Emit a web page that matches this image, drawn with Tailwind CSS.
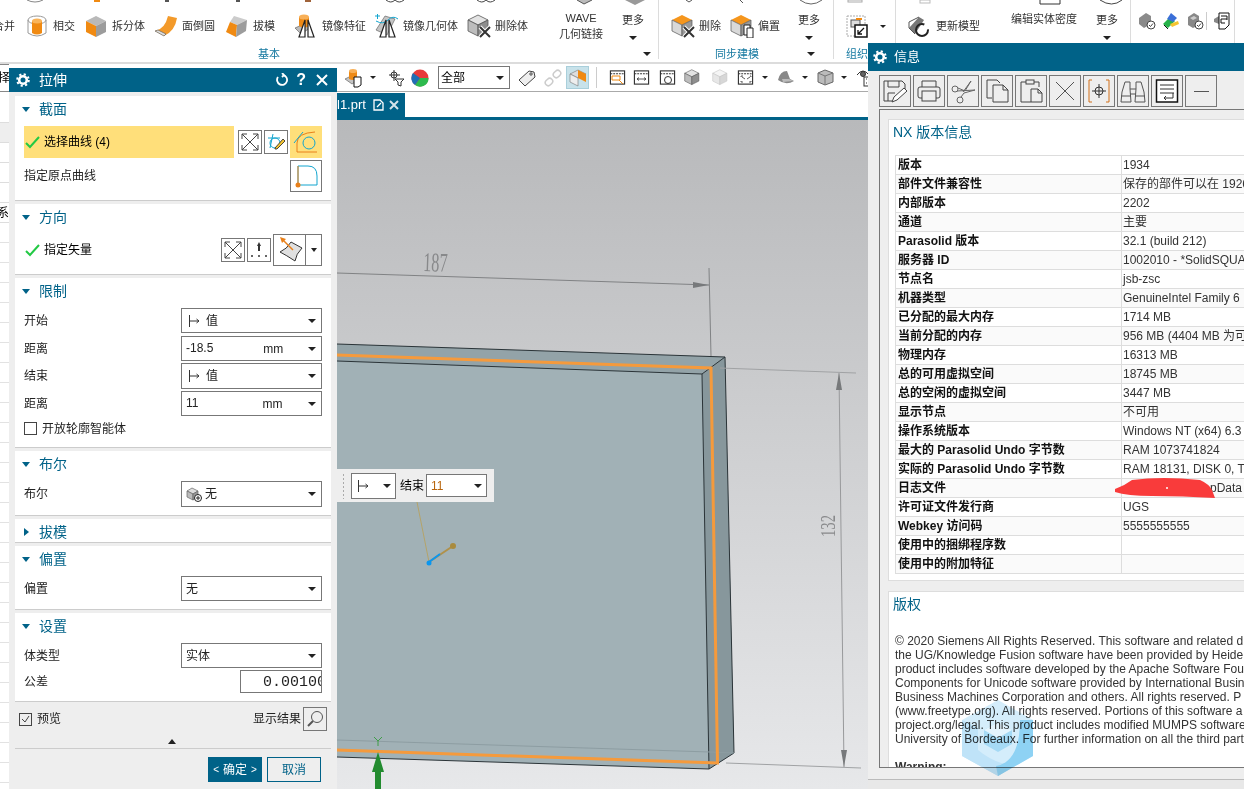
<!DOCTYPE html>
<html lang="zh">
<head>
<meta charset="UTF-8">
<script src="https://cdn.jsdelivr.net/npm/@tailwindcss/browser@4"></script>
<title>拉伸</title>
</head>
<body class="m-0">
<svg width="0" height="0" class="absolute">
  <defs>
    <symbol id="cube-o" viewBox="0 0 24 24"><path d="M12 2 22 7 12 12 2 7Z" fill="#b9b9b9"/><path d="M2 7 12 12V23L2 18Z" fill="#f08a12"/><path d="M22 7 12 12V23L22 18Z" fill="#9c9c9c"/></symbol>
    <symbol id="cube-t" viewBox="0 0 24 24"><path d="M11 1 21 6 11 11 1 6Z" fill="#f5961d"/><path d="M1 6 11 11V22L1 17Z" fill="#d9d9d9" stroke="#555" stroke-width=".7"/><path d="M21 6 11 11V22L21 17Z" fill="#9a9a9a" stroke="#555" stroke-width=".7"/></symbol>
    <symbol id="cube-g" viewBox="0 0 24 24"><path d="M11 1 21 6 11 11 1 6Z" fill="#e3e3e3" stroke="#555" stroke-width=".8"/><path d="M1 6 11 11V22L1 17Z" fill="#bdbdbd" stroke="#555" stroke-width=".8"/><path d="M21 6 11 11V22L21 17Z" fill="#8e8e8e" stroke="#555" stroke-width=".8"/></symbol>
    <symbol id="del-x" viewBox="0 0 24 24"><path d="M13 13 23 23M23 13 13 23" stroke="#fff" stroke-width="4"/><path d="M13 13 23 23M23 13 13 23" stroke="#333" stroke-width="2"/></symbol>
    <symbol id="tri-m" viewBox="0 0 24 24"><path d="M11 6 5 23H11ZM14 6 20 23H14Z" fill="#fff" stroke="#222" stroke-width="1.2"/></symbol>
    <symbol id="arrows-x" viewBox="0 0 18 18" fill="none" stroke="#444" stroke-width="1"><path d="M1 1 17 17M17 1 1 17M1 1H6M1 1V6M17 1H12M17 1V6M1 17H6M1 17V12M17 17H12M17 17V12"/></symbol>
    <symbol id="value-i" viewBox="0 0 14 14" fill="none" stroke="#333" stroke-width="1"><path d="M2.500 1V13M2.500 7H12M9.500 5 12 7 9.500 9"/></symbol>
    <symbol id="gear" viewBox="0 0 14 14"><circle cx="7" cy="7" r="3.800" fill="none" stroke="#fff" stroke-width="2.600"/><circle cx="7" cy="7" r="5.800" fill="none" stroke="#fff" stroke-width="2" stroke-dasharray="2.200 2.350"/></symbol>
    <symbol id="win" viewBox="0 0 18 18" fill="none" stroke="#333" stroke-width="1.200"><rect x="1.500" y="2" width="15" height="14"/><path d="M1.500 5H16.500" stroke-dasharray="2 1" stroke-width="1.200"/></symbol>
  </defs>
</svg>

<div class="relative w-[1244px] h-[789px] overflow-hidden bg-white text-[12px] text-[#333] font-['Liberation_Sans','Noto_Sans_CJK_SC',sans-serif]">

  <!-- ribbon -->
  <div class="relative flex h-[64px] border-b-2 border-[#dcdcdc] text-[11px] overflow-hidden">
    <svg class="absolute left-0 top-0" width="1244" height="5" viewBox="0 0 1244 5" fill="none">
      <path d="M27 0Q35 4 43 0" stroke="#888"/><rect x="94" y="0" width="6" height="2" fill="#f08a12"/><rect x="165" y="0" width="4" height="2" fill="#555"/><rect x="236" y="0" width="4" height="2" fill="#555"/><rect x="305" y="0" width="6" height="2" fill="#a0633a"/>
      <path d="M386 0Q391 4 395 0Q399 4 404 0M477 0Q482 4 486 0Q490 4 495 0" stroke="#444"/><path d="M577 0 584 4 592 0" stroke="#555" fill="#bbb"/><path d="M625 0 635 5 645 0Z" fill="#999"/><path d="M686 0 689 2 692 0M740 0 743 3" stroke="#555"/><path d="M800 0Q811 8 822 0" stroke="#666"/><rect x="848" y="0" width="14" height="2" stroke="#aaa"/><rect x="920" y="0" width="10" height="3" stroke="#bbb"/><path d="M1040 0V4H1060V0" stroke="#333"/><path d="M1100 0Q1112 8 1122 0" stroke="#444"/>
    </svg>

    <div class="w-[659px] shrink-0 border-r border-[#dcdcdc] pt-[5px] h-[59px]">
      <div class="flex items-center h-[42px]">
        <span class="-ml-[7px] whitespace-nowrap">合并</span>
        <div class="flex items-center ml-[10px]"><svg width="24" height="24" viewBox="0 0 24 24"><path d="M3 6V19Q12 25 21 19V6" fill="none" stroke="#999"/><ellipse cx="12" cy="6" rx="9" ry="4" fill="none" stroke="#999"/><path d="M7 7V19Q12 22 17 19V7Z" fill="#f08a12"/><ellipse cx="12" cy="7" rx="5" ry="2.500" fill="#f9b45a"/></svg><span class="ml-[4px] whitespace-nowrap">相交</span></div>
        <div class="flex items-center ml-[9px]"><svg width="24" height="24"><use href="#cube-o"/></svg><span class="ml-[4px] whitespace-nowrap">拆分体</span></div>
        <div class="flex items-center ml-[9px]"><svg width="24" height="24" viewBox="0 0 24 24"><path d="M1 17Q11 15 14 2L23 4Q21 17 10 22Z" fill="#f39a2a"/><path d="M1 17 10 22 12 20 4 16Z" fill="#ddd" stroke="#555" stroke-width=".6"/></svg><span class="ml-[4px] whitespace-nowrap">面倒圆</span></div>
        <div class="flex items-center ml-[10px]"><svg width="24" height="24" viewBox="0 0 24 24"><path d="M9 2 22 6 12 11 5 8Z" fill="#ccc"/><path d="M5 8 12 11 11 23 1 18Z" fill="#f08a12"/><path d="M22 6 12 11 11 23 21 17Z" fill="#9c9c9c"/></svg><span class="ml-[4px] whitespace-nowrap">拔模</span></div>
        <div class="flex items-center ml-[19px]"><svg width="24" height="24" viewBox="0 0 24 24"><path d="M1 14 10 10 16 14 7 20Z" fill="#bbb" stroke="#555" stroke-width=".6"/><path d="M5 3V12Q10 15 15 12V3Z" fill="#ee8a16"/><ellipse cx="10" cy="3" rx="5" ry="2.500" fill="#f8b058"/><use href="#tri-m" width="24" height="24"/></svg><span class="ml-[4px] whitespace-nowrap">镜像特征</span></div>
        <div class="flex items-center ml-[9px]"><svg width="24" height="24" viewBox="0 0 24 24"><path d="M1 16 10 2 20 5 12 21Z" fill="#c5c5c5" stroke="#555" stroke-width=".6"/><path d="M0 2H5M2.500 0V5" stroke="#12a5cf"/><path d="M1 7Q8 11 13 6T23 5" fill="none" stroke="#12a5cf"/><use href="#tri-m" width="24" height="24"/></svg><span class="ml-[4px] whitespace-nowrap">镜像几何体</span></div>
        <div class="flex items-center ml-[9px]"><svg width="24" height="24"><use href="#cube-g"/><use href="#del-x"/></svg><span class="ml-[4px] whitespace-nowrap">删除体</span></div>
        <div class="ml-[20px] w-[66px] text-center leading-[16px]">WAVE<br>几何链接</div>
        <div class="ml-[4px] w-[30px] flex flex-col items-center"><span>更多</span><span class="mt-[8px] w-0 h-0 border-x-[4px] border-x-transparent border-t-[4px] border-t-[#222]"></span></div>
      </div>
      <div class="flex items-center h-[14px]"><span class="w-[538px] text-center text-[#1478a0]">基本</span><span class="ml-[105px] w-0 h-0 border-x-[4px] border-x-transparent border-t-[4px] border-t-[#222]"></span></div>
    </div>

    <div class="w-[175px] shrink-0 border-r border-[#dcdcdc] pt-[5px] h-[59px]">
      <div class="flex items-center h-[42px] pl-[12px]">
        <div class="flex items-center"><svg width="24" height="24"><use href="#cube-t"/><use href="#del-x"/></svg><span class="ml-[4px] whitespace-nowrap">删除</span></div>
        <div class="flex items-center ml-[9px]"><svg width="24" height="24" viewBox="0 0 24 24"><use href="#cube-t" width="24" height="24"/><path d="M14 11H20V21H14Z" fill="#fff" stroke="#222"/><path d="M17 14H23V24H17Z" fill="#fff" stroke="#222"/></svg><span class="ml-[4px] whitespace-nowrap">偏置</span></div>
        <div class="ml-[14px] w-[30px] flex flex-col items-center"><span>更多</span><span class="mt-[8px] w-0 h-0 border-x-[4px] border-x-transparent border-t-[4px] border-t-[#222]"></span></div>
      </div>
      <div class="flex items-center h-[14px]"><span class="w-[156px] text-center text-[#1478a0]">同步建模</span><span class="ml-[-8px] w-0 h-0 border-x-[4px] border-x-transparent border-t-[4px] border-t-[#222]"></span></div>
    </div>

    <div class="w-[62px] shrink-0 border-r border-[#dcdcdc] pt-[5px] h-[59px] pl-[12px]">
      <div class="flex items-center h-[42px]">
        <svg width="22" height="24" viewBox="0 0 22 24" fill="none"><rect x="1" y="2" width="18" height="20" stroke="#aaa" stroke-dasharray="2 1"/><rect x="5" y="6" width="9" height="7" fill="#ddd" stroke="#555"/><path d="M10 5H16" stroke="#f08a12" stroke-width="2"/><rect x="9" y="11" width="12" height="12" fill="#fff" stroke="#111" stroke-width="1.500"/><path d="M18 14 12 20M12 16V20H16" stroke="#111" stroke-width="1.300"/></svg>
        <span class="ml-[12px] w-0 h-0 border-x-[3px] border-x-transparent border-t-[3px] border-t-[#222]"></span>
      </div>
      <div class="h-[14px] leading-[14px] text-[#1478a0]">组织</div>
    </div>

    <div class="w-[235px] shrink-0 border-r border-[#dcdcdc] pt-[5px] h-[59px]">
      <div class="flex items-center h-[42px] pl-[11px]">
        <div class="flex items-center"><svg width="24" height="24" viewBox="0 0 24 24" fill="none"><path d="M2 14 12 3 17 6 8 20Z" fill="#777"/><path d="M8 20 2 14 2 8 12 3" stroke="#555"/><circle cx="15" cy="16" r="6" stroke="#222" stroke-width="2" stroke-dasharray="30 6"/></svg><span class="ml-[5px] whitespace-nowrap">更新模型</span></div>
        <span class="ml-[31px] w-[66px] -mt-[14px] whitespace-nowrap">编辑实体密度</span>
        <div class="ml-[15px] w-[30px] flex flex-col items-center"><span>更多</span><span class="mt-[8px] w-0 h-0 border-x-[4px] border-x-transparent border-t-[4px] border-t-[#222]"></span></div>
      </div>
    </div>

    <div class="w-[104px] shrink-0 border-r border-[#dcdcdc] h-[59px] flex items-center pb-[18px] pl-[7px]">
      <svg width="18" height="18" viewBox="0 0 18 18"><path d="M1 6 8 1 13 4V12L6 16 1 12Z" fill="#8b8b8b"/><circle cx="13" cy="13" r="4" fill="#fff" stroke="#444"/><path d="M11 13 12.500 14.500 15 11.500" stroke="#444" fill="none"/></svg>
      <svg class="ml-[6px]" width="18" height="18" viewBox="0 0 18 18"><path d="M1 12 8 5 13 9 6 16Z" fill="#27b24a"/><path d="M5 7 9 1 15 6 11 10Z" fill="#3a6fd8"/><path d="M8 12 16 9 17 12 10 15Z" fill="#f4c430"/><path d="M2 13 6 17" stroke="#111"/></svg>
      <svg class="ml-[6px]" width="18" height="18" viewBox="0 0 18 18"><path d="M2 5 8 1 13 4V13L7 16 2 13Z" fill="#888"/><path d="M4 6 8 4 11 6 7 8Z" fill="#ccc"/><circle cx="13" cy="13" r="4" fill="#fff" stroke="#444"/><path d="M11 13 12.500 14.500 15 11.500" stroke="#444" fill="none"/></svg>
      <span class="ml-[2px] w-px h-[18px] bg-[#ccc]"></span>
      <svg class="ml-[6px]" width="18" height="18" viewBox="0 0 18 18" fill="none"><path d="M1 7 6 4V12L1 10Z" fill="#888"/><path d="M6 1H16V13L12 17H6Z" fill="#fff" stroke="#111"/><path d="M8 4H14M8 7H14M8 7V11M14 4V8M8 11H12" stroke="#111"/></svg>
    </div>
  </div>

  <div class="flex h-[725px]">
    <!-- left sliver behind the dialog -->
    <div class="w-[9px] shrink-0 flex flex-col text-black overflow-hidden">
      <div class="h-[28px] border-y border-[#888] flex items-center justify-end"><span class="-mr-[1px] whitespace-nowrap">选择</span></div>
      <div class="h-[30px]"></div>
      <div class="h-[21px] bg-[#eee] border-y border-[#ddd]"></div>
      <div class="h-[20px] border-b border-[#ddd]"></div>
      <div class="h-[20px] border-b border-[#ddd]"></div>
      <div class="h-[20px] border-b border-[#ddd]"></div>
      <div class="h-[20px] border-b border-[#ddd] flex items-center justify-end"><span class="whitespace-nowrap">坐标系</span></div>
      <div class="flex-1 bg-[repeating-linear-gradient(to_bottom,#fff_0,#fff_19px,#e2e2e2_19px,#e2e2e2_20px)]"></div>
    </div>

    <div class="flex-1 flex flex-col min-w-0">
      <!-- view toolbar -->
      <div class="h-[28px] border-b border-[#aaa] flex items-center pl-[336px] text-[12px] shrink-0">
        <svg width="18" height="20" viewBox="0 0 18 20"><path d="M0 11 8 7 15 11 7 16Z" fill="#c5c5c5" stroke="#555" stroke-width=".6"/><path d="M4 3V11Q8 13 12 11V3Z" fill="#ee8a16"/><ellipse cx="8" cy="3" rx="4" ry="2" fill="#f8b058"/><path d="M9 9H16V17L13 19H9Z" fill="#fff" stroke="#111"/></svg>
        <span class="ml-[7px] w-0 h-0 border-x-[3px] border-x-transparent border-t-[3px] border-t-[#222]"></span>
        <svg class="ml-[12px]" width="17" height="18" viewBox="0 0 17 18" fill="none" stroke="#333"><path d="M6 1V12M1 6H12"/><circle cx="6" cy="6" r="3"/><path d="M7 10H16L13 13V17L10 16V13Z" fill="#fff"/></svg>
        <svg class="ml-[6px]" width="18" height="18" viewBox="0 0 18 18"><circle cx="9" cy="9" r="8.500" fill="#e83a3a"/><path d="M9 9 17.500 9A8.500 8.500 0 0 1 4 16Z" fill="#2dbb4e"/><path d="M9 9 4 16A8.500 8.500 0 0 1 2 4Z" fill="#1f6fb5"/></svg>
        <div class="ml-[9px] w-[72px] h-[23px] border border-[#777] bg-white flex items-center pl-[2px] pr-[5px] text-black"><span>全部</span><span class="ml-auto w-0 h-0 border-x-[4px] border-x-transparent border-t-[4px] border-t-[#222]"></span></div>
        <svg class="ml-[8px]" width="18" height="18" viewBox="0 0 18 18" fill="none" stroke="#444"><path d="M1 11 11 2 16 3 17 8 7 17Z" fill="#eee"/><circle cx="13" cy="5" r="1.200"/></svg>
        <svg class="ml-[8px]" width="18" height="18" viewBox="0 0 18 18" fill="none" stroke="#ccc" stroke-width="1.500"><rect x="1" y="10" width="8" height="6" rx="3" transform="rotate(-45 5 13)"/><rect x="9" y="2" width="8" height="6" rx="3" transform="rotate(-45 13 5)"/></svg>
        <div class="ml-[4px] w-[23px] h-[23px] bg-[#c8e2ea] border border-[#a9cfdb] flex items-center justify-center"><svg width="18" height="18" viewBox="0 0 18 18"><path d="M9 1 17 5 9 9 1 5Z" fill="#ddd" stroke="#777" stroke-width=".6"/><path d="M1 5 9 9V17L1 13Z" fill="#eee" stroke="#777" stroke-width=".6"/><path d="M9 1 17 5V13L9 9Z" fill="#f08a12"/></svg></div>
        <span class="ml-[7px] w-px h-[21px] bg-[#ccc]"></span>
        <svg class="ml-[12px]" width="17" height="17"><use href="#win"/><path d="M3 7H11V11H3Z M10 11 14 15" fill="none" stroke="#f08a12"/></svg>
        <svg class="ml-[7px]" width="17" height="17"><use href="#win"/><path d="M4 10H13M4 10 6 8.500M4 10 6 11.500M13 10 11 8.500M13 10 11 11.500" fill="none" stroke="#333" stroke-width=".8"/></svg>
        <svg class="ml-[9px]" width="17" height="17"><use href="#win"/><circle cx="9" cy="11" r="3.500" fill="none" stroke="#333"/></svg>
        <svg class="ml-[8px]" width="17" height="17"><use href="#cube-g" width="17" height="17"/></svg>
        <svg class="ml-[11px] opacity-35" width="17" height="17"><use href="#cube-g" width="17" height="17"/></svg>
        <svg class="ml-[8px]" width="17" height="17"><use href="#win"/><path d="M4 8V7H6M13 7H14V8M4 12V13H6M14 12V13H12M5 8 8 10M13 8 10 10" fill="none" stroke="#333" stroke-width=".8"/></svg>
        <span class="ml-[8px] w-0 h-0 border-x-[3px] border-x-transparent border-t-[3px] border-t-[#222]"></span>
        <svg class="ml-[9px]" width="18" height="17" viewBox="0 0 18 17"><path d="M1 11Q3 2 10 2L13 10 17 12Q9 17 1 11Z" fill="#888"/><path d="M5 10H12L16 12 6 13Z" fill="#bbb"/></svg>
        <span class="ml-[7px] w-0 h-0 border-x-[3px] border-x-transparent border-t-[3px] border-t-[#222]"></span>
        <svg class="ml-[9px]" width="17" height="17" viewBox="0 0 17 17"><path d="M8 1 16 4V13L8 16 1 13V4Z" fill="#bbb" stroke="#666"/><path d="M1 4 8 7 16 4M8 7V16" fill="none" stroke="#777"/></svg>
        <span class="ml-[7px] w-0 h-0 border-x-[3px] border-x-transparent border-t-[3px] border-t-[#222]"></span>
        <svg class="ml-[9px]" width="18" height="18" viewBox="0 0 18 18" fill="none" stroke="#333"><path d="M1 6Q7 -2 13 6" /><circle cx="7" cy="5" r="2.500" fill="#666"/><rect x="8" y="8" width="9" height="9" fill="#fff"/><path d="M10 10H11M14 10H15M10 14H11M14 14H15"/></svg>
      </div>

      <!-- file tab -->
      <div class="h-[28px] border-b-[3px] border-[#006288] pl-[328px] pt-px shrink-0">
        <div class="w-[68px] h-[24px] bg-[#006288] text-white text-[13px] flex items-center whitespace-nowrap overflow-hidden">
          <span>l1.prt</span>
          <svg class="ml-[7px]" width="11" height="12" viewBox="0 0 11 12" fill="none" stroke="#fff" stroke-width="1.300"><path d="M1 1H7L10 4V11H1Z"/><path d="M4 8 8 4"/></svg>
          <svg class="ml-[5px]" width="10" height="10" viewBox="0 0 10 10" stroke="#d5e3ea" stroke-width="2"><path d="M1 1 9 9M9 1 1 9"/></svg>
        </div>
      </div>

      <!-- graphics window -->
      <div class="flex-1 relative bg-linear-to-b from-[#b8b9bb] to-[#e7e8ea] overflow-hidden">
        <svg class="absolute left-0 top-0" width="1235" height="669" viewBox="9 120 1235 669" fill="none">
          <path d="M337 344 725 357 734 753 709 769 337 757Z" fill="#a1b1b6"/>
          <path d="M337 344 725 357 702 374 337 361Z" fill="#93a3a8"/>
          <path d="M725 357 734 753 709 769 702 374Z" fill="#87979c"/>
          <path d="M337 344 725 357 734 753M725 357 702 374 709 769 734 753M702 374 337 361M709 769 337 757" stroke="#2b3438" stroke-width="1"/>
          <path d="M337 740 710 752 734 753" stroke="#8d9da2"/>
          <path d="M337 355 711 368 717.500 763 337 750" stroke="#f59a3c" stroke-width="3"/>
          <!-- dimensions -->
          <path d="M337 273 709 285" stroke="#808284"/><path d="M693 282 709 285 693 288Z" fill="#77797b"/>
          <path d="M709 268 711 356" stroke="#808284"/>
          <path d="M720 368 856 373M726 763 861 768" stroke="#a0a2a4"/>
          <path d="M839 373 844 767" stroke="#98999b"/><path d="M836 390 839 373 842 390ZM841 750 844 767 847 750Z" fill="#77797b"/>
          <text transform="translate(423 271) rotate(2) scale(.6 1)" fill="#88898b" font-family="Liberation Serif, serif" font-size="27">187</text>
          <text transform="translate(835 537) rotate(-90) scale(.67 1)" fill="#88898b" font-family="Liberation Serif, serif" font-size="22">132</text>
          <!-- handle -->
          <path d="M417 502 429 562" stroke="#b5a36a"/><path d="M429 562 453 546" stroke="#b0914a" stroke-width="2"/><circle cx="453" cy="546" r="3" fill="#a98b3e"/><path d="M429 562 440 554" stroke="#0a96ef" stroke-width="2"/><circle cx="429" cy="563" r="2.500" fill="#0a96ef"/>
          <!-- wcs -->
          <path d="M378 746V741M378 741 374 737M378 741 382 737" stroke="#3f9d48"/>
          <path d="M378 752 384 772H381V789H375V772H372Z" fill="#228b2f"/>
        </svg>

        <!-- on-screen input -->
        <div class="absolute left-[328px] top-[349px] w-[157px] h-[33px] bg-[#eee] flex items-center pl-[5px] text-black">
          <span class="w-[3px] h-[26px] bg-[radial-gradient(#aaa_1px,transparent_1px)] bg-[length:3px_4px]"></span>
          <div class="ml-[6px] w-[45px] h-[26px] border border-[#777] bg-white flex items-center pl-[4px] pr-[4px]"><svg width="14" height="14"><use href="#value-i"/></svg><span class="ml-auto w-0 h-0 border-x-[4px] border-x-transparent border-t-[4px] border-t-[#222]"></span></div>
          <span class="ml-[4px]">结束</span>
          <div class="ml-[2px] w-[61px] h-[23px] border border-[#777] bg-white flex items-center pl-[4px] pr-[4px]"><span class="text-[#b8650d]">11</span><span class="ml-auto w-0 h-0 border-x-[4px] border-x-transparent border-t-[4px] border-t-[#222]"></span></div>
        </div>
      </div>
    </div>
  </div>

  <!-- extrude dialog -->
  <div class="absolute left-[9px] top-[68px] w-[328px] h-[721px] bg-[#eee] flex flex-col">
    <div class="h-[24px] bg-[#006288] text-white flex items-center pl-[7px] shrink-0">
      <svg width="14" height="14"><use href="#gear"/></svg>
      <span class="ml-[9px] text-[14px]">拉伸</span>
      <svg class="ml-auto" width="14" height="14" viewBox="0 0 14 14" fill="none" stroke="#fff" stroke-width="2"><path d="M8 2A5 5 0 1 1 3 4M7 0 9 2 7 4" stroke-width="1.800"/></svg>
      <span class="ml-[7px] text-[16px] font-bold leading-none">?</span>
      <svg class="ml-[10px] mr-[9px]" width="12" height="12" viewBox="0 0 12 12" stroke="#fff" stroke-width="2"><path d="M1 1 11 11M11 1 1 11"/></svg>
    </div>

    <div class="px-[6px] pt-[4px] flex flex-col gap-[3px]">
      <section class="h-[105px] bg-white border-b border-[#ccc]">
        <div class="h-[26px] flex items-center pl-[7px] text-[14px] text-[#006288]"><span class="w-0 h-0 border-x-[4px] border-x-transparent border-t-[5px] border-t-[#006288]"></span><span class="ml-[9px]">截面</span></div>
        <div class="mt-[4px] px-[9px] flex items-center h-[32px]">
          <div class="w-[210px] h-[32px] bg-[#ffdf7a] flex items-center pl-px text-black">
            <svg width="15" height="13" viewBox="0 0 15 13" fill="none" stroke="#22c944" stroke-width="2"><path d="M1 7 5 11 14 1"/></svg><span class="ml-[4px]">选择曲线 (4)</span>
          </div>
          <div class="ml-[4px] w-[24px] h-[24px] border border-[#777] flex items-center justify-center"><svg width="18" height="18"><use href="#arrows-x"/></svg></div>
          <div class="ml-[2px] w-[24px] h-[24px] border border-[#777] flex items-center justify-center"><svg width="20" height="20" viewBox="0 0 20 20" fill="none"><path d="M2 6H14M7 2 4 16" stroke="#12a5cf"/><circle cx="9" cy="11" r="5" stroke="#12a5cf"/><path d="M9 16 17 7 19 9 11 17H9Z" fill="#f4c430" stroke="#222" stroke-width=".8"/></svg></div>
          <div class="ml-[2px] w-[32px] h-[32px] bg-[#ffdf7a] flex items-center justify-center"><svg width="26" height="26" viewBox="0 0 26 26" fill="none"><path d="M4 23V14Q4 4 22 3" stroke="#e8801a"/><path d="M4 23H24" stroke="#e8801a"/><path d="M1 14 10 3" stroke="#12a5cf"/><circle cx="16" cy="14" r="6" stroke="#12a5cf"/></svg></div>
        </div>
        <div class="mt-[2px] px-[9px] flex items-center h-[32px] text-[#222]">
          <span>指定原点曲线</span>
          <div class="ml-auto w-[32px] h-[32px] border border-[#777] flex items-center justify-center"><svg width="26" height="26" viewBox="0 0 26 26" fill="none"><path d="M5 22V3H15Q24 3 24 13V22H5" stroke="#12a5cf"/><path d="M5 22V3" stroke="#e8801a"/><circle cx="5" cy="22" r="2.500" fill="#e8801a"/></svg></div>
        </div>
      </section>

      <section class="h-[71px] bg-white border-b border-[#ccc]">
        <div class="h-[26px] flex items-center pl-[7px] text-[14px] text-[#006288]"><span class="w-0 h-0 border-x-[4px] border-x-transparent border-t-[5px] border-t-[#006288]"></span><span class="ml-[9px]">方向</span></div>
        <div class="mt-[4px] px-[9px] flex items-center h-[32px] text-black">
          <svg class="ml-px" width="15" height="13" viewBox="0 0 15 13" fill="none" stroke="#22c944" stroke-width="2"><path d="M1 7 5 11 14 1"/></svg><span class="ml-[4px]">指定矢量</span>
          <div class="ml-auto w-[24px] h-[24px] border border-[#777] flex items-center justify-center"><svg width="18" height="18"><use href="#arrows-x"/></svg></div>
          <div class="ml-[2px] w-[24px] h-[24px] border border-[#777] flex items-center justify-center"><svg width="20" height="20" viewBox="0 0 20 20" fill="#333"><path d="M10 2 12 6H11V11H9V6H8Z"/><circle cx="3" cy="16" r="1"/><circle cx="10" cy="16" r="1"/><circle cx="17" cy="16" r="1"/></svg></div>
          <div class="ml-[2px] w-[49px] h-[32px] border border-[#777] flex items-center">
            <div class="w-[32px] h-full border-r border-[#777] flex items-center justify-center"><svg width="26" height="26" viewBox="0 0 26 26"><path d="M3 15Q10 12 14 5L25 11Q19 17 18 24Q9 18 3 15Z" fill="#e0e0e0" stroke="#333"/><path d="M5 2 16 13" stroke="#e8801a" stroke-width="1.500"/><path d="M3 0 9 2 5 6Z" fill="#e8801a"/></svg></div>
            <span class="ml-[5px] w-0 h-0 border-x-[3px] border-x-transparent border-t-[4px] border-t-[#222]"></span>
          </div>
        </div>
      </section>

      <section class="h-[170px] bg-white border-b border-[#ccc]">
        <div class="h-[26px] flex items-center pl-[7px] text-[14px] text-[#006288]"><span class="w-0 h-0 border-x-[4px] border-x-transparent border-t-[5px] border-t-[#006288]"></span><span class="ml-[9px]">限制</span></div>
        <div class="mt-[4px] px-[9px] flex flex-col text-[#222]">
          <div class="flex items-center justify-between h-[25px]"><span>开始</span><div class="w-[141px] h-[25px] border border-[#777] flex items-center pl-[5px] pr-[5px]"><svg width="14" height="14"><use href="#value-i"/></svg><span class="ml-[5px]">值</span><span class="ml-auto w-0 h-0 border-x-[4px] border-x-transparent border-t-[4px] border-t-[#222]"></span></div></div>
          <div class="mt-[3px] flex items-center justify-between h-[25px]"><span>距离</span><div class="w-[141px] h-[25px] border border-[#777] flex items-center pl-[4px] pr-[5px]"><span class="-mt-[1px]">-18.5</span><span class="ml-[50px] mt-px">mm</span><span class="ml-auto w-0 h-0 border-x-[4px] border-x-transparent border-t-[4px] border-t-[#222]"></span></div></div>
          <div class="mt-[2px] flex items-center justify-between h-[26px]"><span>结束</span><div class="w-[141px] h-[26px] border border-[#777] flex items-center pl-[5px] pr-[5px]"><svg width="14" height="14"><use href="#value-i"/></svg><span class="ml-[5px]">值</span><span class="ml-auto w-0 h-0 border-x-[4px] border-x-transparent border-t-[4px] border-t-[#222]"></span></div></div>
          <div class="mt-[2px] flex items-center justify-between h-[25px]"><span>距离</span><div class="w-[141px] h-[25px] border border-[#777] flex items-center pl-[4px] pr-[5px]"><span class="-mt-[1px]">11</span><span class="ml-[64px] mt-px">mm</span><span class="ml-auto w-0 h-0 border-x-[4px] border-x-transparent border-t-[4px] border-t-[#222]"></span></div></div>
          <div class="mt-[6px] flex items-center h-[13px]"><span class="w-[13px] h-[13px] border border-[#444]"></span><span class="ml-[5px]">开放轮廓智能体</span></div>
        </div>
      </section>

      <section class="h-[65px] bg-white border-b border-[#ccc]">
        <div class="h-[26px] flex items-center pl-[7px] text-[14px] text-[#006288]"><span class="w-0 h-0 border-x-[4px] border-x-transparent border-t-[5px] border-t-[#006288]"></span><span class="ml-[9px]">布尔</span></div>
        <div class="mt-[4px] px-[9px] flex items-center justify-between text-[#222]"><span>布尔</span><div class="w-[141px] h-[26px] border border-[#777] flex items-center pl-[4px] pr-[5px]"><svg width="17" height="17" viewBox="0 0 17 17" fill="none"><path d="M1 5 6 2 12 5 7 8Z" fill="#ddd" stroke="#666" stroke-width=".7"/><path d="M1 5 7 8V14L1 11Z" fill="#bbb" stroke="#666" stroke-width=".7"/><path d="M12 5 7 8V14L12 11Z" fill="#999" stroke="#666" stroke-width=".7"/><circle cx="12" cy="12" r="3.500" fill="#fff" stroke="#222"/><path d="M12 10V14M10 12H14" stroke="#222"/></svg><span class="ml-[2px]">无</span><span class="ml-auto w-0 h-0 border-x-[4px] border-x-transparent border-t-[4px] border-t-[#222]"></span></div></div>
      </section>

      <section class="h-[24px] bg-white border-b border-[#ccc]">
        <div class="h-[26px] flex items-center pl-[9px] text-[14px] text-[#006288]"><span class="w-0 h-0 border-y-[4px] border-y-transparent border-l-[5px] border-l-[#006288]"></span><span class="ml-[10px]">拔模</span></div>
      </section>

      <section class="h-[64px] bg-white border-b border-[#ccc]">
        <div class="h-[26px] flex items-center pl-[7px] text-[14px] text-[#006288]"><span class="w-0 h-0 border-x-[4px] border-x-transparent border-t-[5px] border-t-[#006288]"></span><span class="ml-[9px]">偏置</span></div>
        <div class="mt-[4px] px-[9px] flex items-center justify-between text-[#222]"><span>偏置</span><div class="w-[141px] h-[25px] border border-[#777] flex items-center pl-[4px] pr-[5px]"><span>无</span><span class="ml-auto w-0 h-0 border-x-[4px] border-x-transparent border-t-[4px] border-t-[#222]"></span></div></div>
      </section>

      <section class="h-[89px] bg-white border-b border-[#ccc]">
        <div class="h-[26px] flex items-center pl-[7px] text-[14px] text-[#006288]"><span class="w-0 h-0 border-x-[4px] border-x-transparent border-t-[5px] border-t-[#006288]"></span><span class="ml-[9px]">设置</span></div>
        <div class="mt-[4px] px-[9px] flex items-center justify-between text-[#222]"><span>体类型</span><div class="w-[141px] h-[25px] border border-[#777] flex items-center pl-[4px] pr-[5px]"><span>实体</span><span class="ml-auto w-0 h-0 border-x-[4px] border-x-transparent border-t-[4px] border-t-[#222]"></span></div></div>
        <div class="mt-[2px] px-[9px] flex items-center justify-between text-[#222]"><span>公差</span><div class="w-[82px] h-[23px] border border-[#777] overflow-hidden pl-[22px] leading-[23px] text-[15px] font-['Liberation_Mono',monospace] whitespace-nowrap">0.00100</div></div>
      </section>
    </div>

    <div class="mt-[5px] h-[24px] pl-[10px] pr-[10px] flex items-center text-[#222]">
      <svg width="13" height="13" viewBox="0 0 13 13" fill="none" stroke="#444"><rect x=".5" y=".5" width="12" height="12"/><path d="M3 6 6 9 10 3"/></svg>
      <span class="ml-[5px]">预览</span>
      <span class="ml-auto">显示结果</span>
      <div class="ml-[2px] w-[24px] h-[24px] border border-[#777] flex items-center justify-center"><svg width="18" height="18" viewBox="0 0 18 18" fill="none" stroke="#555"><circle cx="11" cy="7" r="5.500"/><path d="M7 11 2 16" stroke-width="2"/></svg></div>
    </div>
    <span class="mt-[8px] ml-[159px] w-0 h-0 border-x-[4px] border-x-transparent border-b-[5px] border-b-[#222]"></span>
    <div class="mt-[4px] mx-[6px] h-px bg-[#ccc]"></div>
    <div class="mt-[8px] pl-[199px] flex">
      <div class="w-[54px] h-[25px] bg-[#006288] text-white flex items-center justify-center gap-[4px] whitespace-nowrap"><span class="text-[10px]">&lt;</span><span>确定</span><span class="text-[10px]">&gt;</span></div>
      <div class="ml-[5px] w-[54px] h-[25px] border border-[#006288] text-[#006288] flex items-center justify-center">取消</div>
    </div>
  </div>

  <!-- information window -->
  <div class="absolute left-[868px] top-[43px] w-[376px] h-[746px] bg-[#eee] flex flex-col overflow-hidden">
    <div class="h-[28px] bg-[#006288] text-white flex items-center pl-[5px] shrink-0"><svg width="14" height="14"><use href="#gear"/></svg><span class="ml-[7px] text-[13px]">信息</span></div>
    <div class="flex gap-[2px] pl-[11px] pt-[4px] shrink-0">
      <div class="w-[32px] h-[32px] border border-[#777] flex items-center justify-center"><svg width="26" height="26" viewBox="0 0 26 26" fill="none" stroke="#444"><path d="M2 3H20L23 6V12M2 3V23H10M6 3V9H17V3M6 23V15H13"/><path d="M10 24 12 19 22 10 25 13 15 22Z" fill="#fff"/></svg></div>
      <div class="w-[32px] h-[32px] border border-[#777] flex items-center justify-center"><svg width="26" height="26" viewBox="0 0 26 26" fill="none" stroke="#444"><rect x="2" y="9" width="22" height="11" rx="2"/><path d="M6 9V3H20V9"/><rect x="6" y="13" width="14" height="10" fill="#eee"/></svg></div>
      <div class="w-[32px] h-[32px] border border-[#777] flex items-center justify-center"><svg width="26" height="26" viewBox="0 0 26 26" fill="none" stroke="#666"><circle cx="5" cy="11" r="3"/><circle cx="10" cy="22" r="3"/><path d="M7 13 25 12 14 15 11 19M8 10 15 13 21 3 13 14"/></svg></div>
      <div class="w-[32px] h-[32px] border border-[#777] flex items-center justify-center"><svg width="26" height="26" viewBox="0 0 26 26" fill="none" stroke="#444"><path d="M3 2H13L16 5M3 2V20H8"/><path d="M9 7H19L24 12V24H9ZM19 7V12H24" fill="#eee"/></svg></div>
      <div class="w-[32px] h-[32px] border border-[#777] flex items-center justify-center"><svg width="26" height="26" viewBox="0 0 26 26" fill="none" stroke="#444"><path d="M8 4H3V24H13M16 4H21V9"/><rect x="8" y="2" width="8" height="4"/><path d="M13 11H20L24 15V24H13ZM20 11V15H24" fill="#eee"/></svg></div>
      <div class="w-[32px] h-[32px] border border-[#777] flex items-center justify-center"><svg width="22" height="22" viewBox="0 0 22 22" stroke="#555"><path d="M2 2 20 20M20 2 2 20"/></svg></div>
      <div class="w-[32px] h-[32px] border border-[#777] flex items-center justify-center"><svg width="26" height="26" viewBox="0 0 26 26" fill="none"><path d="M6 2H3V24H6M20 2H23V24H20" stroke="#d2701a"/><circle cx="13" cy="13" r="4" stroke="#333"/><path d="M13 6V20M6 13H20" stroke="#333"/></svg></div>
      <div class="w-[32px] h-[32px] border border-[#777] flex items-center justify-center"><svg width="26" height="26" viewBox="0 0 26 26" fill="none" stroke="#555"><path d="M5 4H10V11L11 24H1L2 14ZM16 4H21L24 14 25 24H15L16 11ZM10 11H16M10 16H16"/><path d="M1 18H11M15 18H25"/></svg></div>
      <div class="w-[32px] h-[32px] border border-[#777] flex items-center justify-center"><svg width="24" height="26" viewBox="0 0 24 26" fill="none"><rect x="1.500" y="2" width="21" height="22" fill="#fff" stroke="#111" stroke-width="1.500"/><path d="M5 7H19M5 11H19M5 15H19" stroke="#333"/><path d="M18 15V20H9M9 20 11 18M9 20 11 22" stroke="#333"/></svg></div>
      <div class="w-[32px] h-[32px] border border-[#777] flex items-center justify-center"><span class="w-[15px] h-px bg-[#555]"></span></div>
    </div>

    <div class="mt-[2px] ml-[11px] h-[659px] border-t border-l border-b border-[#777] pl-[8px] pt-[9px] overflow-hidden shrink-0">
      <div class="w-[400px] h-[462px] bg-white border border-[#ddd] pl-[6px]">
        <div class="h-[24px] flex items-center -ml-[2px] text-[14px] text-[#006288]">NX 版本信息</div>
        <table class="mt-[11px] w-[500px] table-fixed border-collapse [&_td]:h-[19px] [&_td]:p-0 [&_td]:pt-px [&_td]:pl-[2px] [&_td]:border [&_td]:border-[#ddd] [&_td]:whitespace-nowrap [&_td]:leading-[17px] [&_td:nth-child(2)]:pl-px [&_td:first-child]:font-bold [&_td:first-child]:text-[#111] [&_td:first-child]:w-[226px] [&_tr:nth-child(even)]:bg-[#fafafa]">
          <tr><td>版本</td><td>1934</td></tr>
          <tr><td>部件文件兼容性</td><td>保存的部件可以在 1926</td></tr>
          <tr><td>内部版本</td><td>2202</td></tr>
          <tr><td>通道</td><td>主要</td></tr>
          <tr><td>Parasolid 版本</td><td>32.1 (build 212)</td></tr>
          <tr><td>服务器 ID</td><td>1002010 - *SolidSQUAD</td></tr>
          <tr><td>节点名</td><td>jsb-zsc</td></tr>
          <tr><td>机器类型</td><td>GenuineIntel Family 6</td></tr>
          <tr><td>已分配的最大内存</td><td>1714 MB</td></tr>
          <tr><td>当前分配的内存</td><td>956 MB (4404 MB 为可用)</td></tr>
          <tr><td>物理内存</td><td>16313 MB</td></tr>
          <tr><td>总的可用虚拟空间</td><td>18745 MB</td></tr>
          <tr><td>总的空闲的虚拟空间</td><td>3447 MB</td></tr>
          <tr><td>显示节点</td><td>不可用</td></tr>
          <tr><td>操作系统版本</td><td>Windows NT (x64) 6.3</td></tr>
          <tr><td>最大的 Parasolid Undo 字节数</td><td>RAM 1073741824</td></tr>
          <tr><td>实际的 Parasolid Undo 字节数</td><td>RAM 18131, DISK 0, T</td></tr>
          <tr><td>日志文件</td><td class="pl-[88px]!">pData</td></tr>
          <tr><td>许可证文件发行商</td><td>UGS</td></tr>
          <tr><td>Webkey 访问码</td><td>5555555555</td></tr>
          <tr><td>使用中的捆绑程序数</td><td></td></tr>
          <tr><td>使用中的附加特征</td><td></td></tr>
        </table>
      </div>
      <div class="mt-[10px] w-[400px] h-[200px] bg-white border border-[#ddd] pl-[6px] overflow-hidden">
        <div class="h-[24px] flex items-center -ml-[2px] text-[14px] text-[#006288]">版权</div>
        <div class="mt-[18px] leading-[14px] whitespace-nowrap text-[#333]">
          <p>© 2020 Siemens All Rights Reserved. This software and related d</p>
          <p>the UG/Knowledge Fusion software have been provided by Heide</p>
          <p>product includes software developed by the Apache Software Fou</p>
          <p>Components for Unicode software provided by International Busin</p>
          <p>Business Machines Corporation and others. All rights reserved. P</p>
          <p>(www.freetype.org). All rights reserved. Portions of this software a</p>
          <p>project.org/legal. This product includes modified MUMPS software</p>
          <p>University of Bordeaux. For further information on all the third part</p>
          <p class="mt-[14px] font-bold">Warning:</p>
        </div>
      </div>
    </div>
    <div class="h-[12px] border-b border-[#bbb] shrink-0"></div>
    <div class="flex-1 bg-[#e8e8e8]"></div>
  </div>

  <!-- red scribble over the log file path -->
  <svg class="absolute left-[1112px] top-[476px]" width="108" height="26" viewBox="0 0 108 26"><path d="M3 13Q12 10 20 4Q50 0 88 4Q97 8 100 14L103 22Q70 20 40 20Q15 20 3 16Z" fill="#f93b3b"/><circle cx="55" cy="12" r="1" fill="#fff"/></svg>

  <!-- site watermark -->
  <svg class="absolute left-[962px] top-[700px] mix-blend-multiply" width="72" height="76" viewBox="0 0 72 76">
    <path d="M36 0 71 20V56L36 76 0 56V20Z" fill="#d4edfb"/>
    <path d="M16 50Q30 62 50 66L36 76 0 56V20L16 28Z" fill="#bfe3f8"/>
    <path d="M58 20 71 20V56L36 76 34 66Q58 62 58 20Z" fill="#8ed2f4"/>
    <path d="M36 22 50 30V44L36 52 22 44V30Z" fill="#a5daf5"/>
    <path d="M36 22 50 30 36 38 22 30Z" fill="#e4f4fd"/>
  </svg>
</div>
</body>
</html>
